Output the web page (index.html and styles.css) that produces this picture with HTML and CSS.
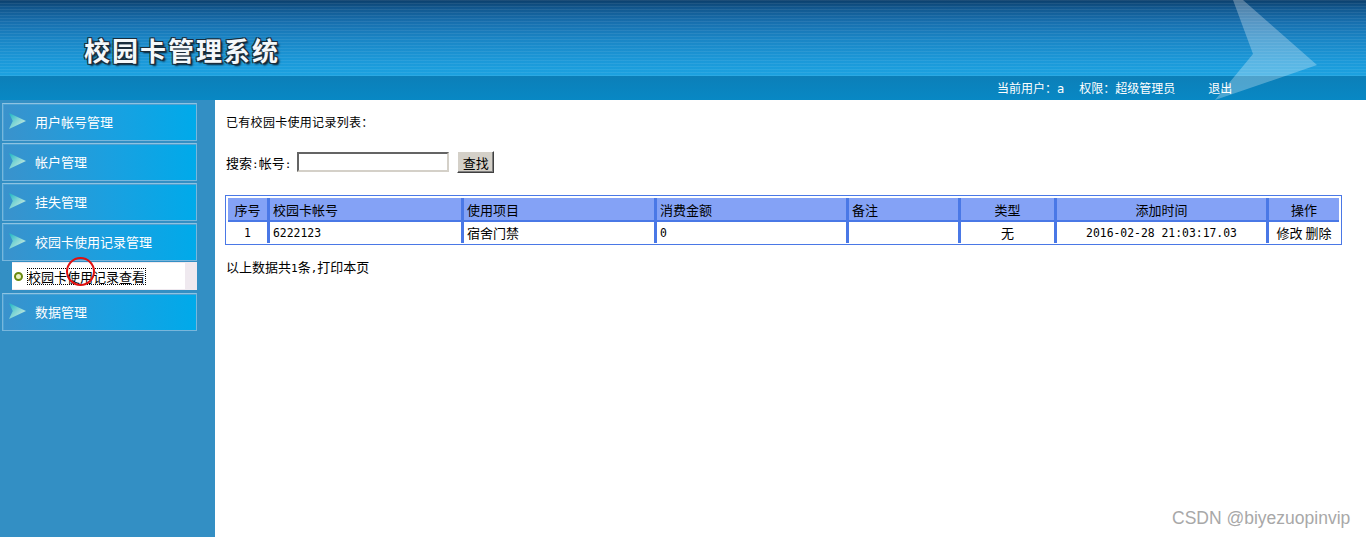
FILE: index.html
```html
<!DOCTYPE html>
<html lang="zh">
<head>
<meta charset="utf-8">
<title>校园卡管理系统</title>
<link rel="stylesheet" href="styles.css">
</head>
<body>
<div class="header">
  <div class="banner">
    <h1 class="logo">校园卡管理系统</h1>
    <svg class="plane" width="140" height="100" viewBox="0 0 140 100">
      <polygon points="18,0 28,0 102,65 0,100 38,54" fill="#ffffff" fill-opacity="0.28"/>
    </svg>
  </div>
  <div class="userbar">
    <span>当前用户：<span class="m">a</span></span>
    <span class="gap">权限：超级管理员</span>
    <span class="logout">退出</span>
  </div>
</div>
<div class="body">
  <div class="sidebar">
    <div class="menu"><span class="arrow"></span>用户帐号管理</div>
    <div class="menu"><span class="arrow"></span>帐户管理</div>
    <div class="menu"><span class="arrow"></span>挂失管理</div>
    <div class="menu"><span class="arrow"></span>校园卡使用记录管理</div>
    <div class="sub">
      <div class="subinner"><span class="ring"></span><span class="sublink">校园卡使用记录查看</span></div>
      <span class="mark"></span>
    </div>
    <div class="menu"><span class="arrow"></span>数据管理</div>
  </div>
  <div class="content">
    <p class="title">已有校园卡使用记录列表：</p>
    <div class="search">
      <span>搜索<span class="m">:</span>帐号<span class="m">:</span></span>
      <input class="inp" type="text">
      <button class="btn">查找</button>
    </div>
    <table class="grid">
      <tr>
        <th class="c1 ctr">序号</th>
        <th class="c2">校园卡帐号</th>
        <th class="c3">使用项目</th>
        <th class="c4">消费金额</th>
        <th class="c5">备注</th>
        <th class="c6 ctr">类型</th>
        <th class="c7 ctr">添加时间</th>
        <th class="c8 ctr">操作</th>
      </tr>
      <tr>
        <td class="ctr"><span class="m">1</span></td>
        <td><span class="m">6222123</span></td>
        <td>宿舍门禁</td>
        <td><span class="m">0</span></td>
        <td></td>
        <td class="ctr">无</td>
        <td class="ctr"><span class="m">2016-02-28 21:03:17.03</span></td>
        <td class="ctr">修改 删除</td>
      </tr>
    </table>
    <p class="foot">以上数据共<span class="m">1</span>条<span class="m">,</span>打印本页</p>
  </div>
</div>
<div class="watermark">CSDN @biyezuopinvip</div>
</body>
</html>
```

FILE: styles.css
```css
* { box-sizing: border-box; }
html, body { margin: 0; padding: 0; }
body {
  width: 1366px;
  height: 537px;
  overflow: hidden;
  font-family: "Noto Sans CJK SC", "DejaVu Sans", sans-serif;
  font-size: 12px;
  color: #000;
  background: #fff;
  position: relative;
}
.m {
  font-family: "DejaVu Sans Mono", "Liberation Mono", monospace;
  font-size: 11px;
}
.header { height: 100px; }
.banner {
  height: 76px;
  position: relative;
  background:
    repeating-linear-gradient(to bottom, rgba(255,255,255,0.07) 0, rgba(255,255,255,0.07) 1px, rgba(0,0,0,0) 1px, rgba(0,0,0,0) 3px),
    linear-gradient(to bottom, #0b3f6c 0, #11578e 8px, #176fae 22px, #1a86c6 40px, #1b98d8 60px, #1ca2e0 76px);
  padding: 32px 0 0 84px;
}
.logo {
  margin: 0;
  font-size: 26px;
  line-height: 36px;
  font-weight: bold;
  color: #f4f8fa;
  letter-spacing: 2px;
  text-shadow: -1px -1px 0 #1b2c3a, 1px -1px 0 #1b2c3a, -1px 1px 0 #1b2c3a, 1px 1px 0 #1b2c3a, 2px 2px 2px #0a1a28;
}
.plane {
  position: absolute;
  left: 1215px;
  top: 0;
}
.userbar {
  height: 24px;
  background: linear-gradient(to bottom, #0c7fb8 0, #0888c4 100%);
  color: #fff;
  font-size: 12px;
  line-height: 24px;
  padding-left: 997px;
  display: flex;
}
.userbar .m { font-size: 12px; }
.userbar .gap { margin-left: 15px; }
.userbar .logout { margin-left: 33px; }
.body {
  display: flex;
  height: 437px;
}
.sidebar {
  width: 215px;
  flex: none;
  background: #338fc4;
  padding: 3px 18px 0 2px;
}
.menu {
  height: 38px;
  margin-bottom: 2px;
  border: 1px solid #78b6dc;
  border-top-color: #8fc3e2;
  box-shadow: inset 1px 1px 0 #4aa2d4;
  background: linear-gradient(to right, #3a92cc 0%, #1aa0e0 55%, #00aaea 100%);
  color: #fff;
  font-size: 13px;
  display: flex;
  align-items: center;
  padding: 0 0 2px 6px;
}
.arrow {
  width: 17px;
  height: 16px;
  margin-right: 9px;
  background: linear-gradient(135deg, #18b4c4 0%, #7cd4d4 45%, #e0f2e4 100%);
  clip-path: polygon(0 0, 100% 50%, 0 100%, 22% 50%);
}
.sub {
  height: 28px;
  margin: -1px 0 3px 10px;
  background: #efe9ef;
  position: relative;
  padding: 1px 12px 0 0;
}
.subinner {
  background: #fff;
  height: 26px;
  display: flex;
  align-items: center;
  padding-left: 2px;
}
.ring {
  width: 9px;
  height: 9px;
  border-radius: 50%;
  border: 2px solid #6a8a10;
  background: #e8f0c0;
  margin-right: 5px;
}
.sublink {
  font-size: 13px;
  outline: 1px dotted #000;
  line-height: 15px;
}
.mark {
  position: absolute;
  left: 54px;
  top: -5px;
  width: 29px;
  height: 29px;
  border: 2px solid #e01010;
  border-radius: 50%;
}
.content {
  flex: 1;
  padding: 14px 0 0 11px;
}
.title {
  margin: 0;
  line-height: 16px;
  letter-spacing: 0.3px;
}
.search {
  margin-top: 21px;
  height: 22px;
  display: flex;
  align-items: center;
  font-size: 13px;
}
.inp {
  width: 152px;
  height: 20px;
  margin: 0 0 0 6px;
  border: 2px solid;
  border-color: #646464 #d4d0c8 #d4d0c8 #646464;
  background: #fff;
  padding: 0;
}
.btn {
  margin-left: 8px;
  width: 37px;
  height: 22px;
  padding: 0;
  font-family: "Noto Sans CJK SC", sans-serif;
  font-size: 13px;
  background: #d4d0c8;
  border: 1px solid;
  border-color: #fff #404040 #404040 #fff;
  box-shadow: inset -1px -1px 0 #808080;
  color: #000;
}
.grid {
  margin: 22px 0 0 -1px;
  width: 1116px;
  table-layout: fixed;
  border-collapse: separate;
  border-spacing: 0;
  border: 1px solid #4a78e6;
  padding: 2px 2px 1px 2px;
}
.grid th, .grid td {
  border-left: 3px solid #4a78e6;
  padding: 0 0 0 3px;
  text-align: left;
  font-weight: normal;
  font-size: 13px;
  white-space: nowrap;
}
.grid .m { font-size: 11.4px; }
.grid th:first-child, .grid td:first-child { border-left: 0; }
.grid th {
  background: #84a2f6;
  height: 24px;
  border-bottom: 2px solid #4a78e6;
}
.grid td { height: 21px; line-height: 18px; }
.grid .ctr { text-align: center; padding: 0; }
.c1 { width: 39px; }
.c2 { width: 194px; }
.c3 { width: 193px; }
.c4 { width: 192px; }
.c5 { width: 112px; }
.c6 { width: 96px; }
.c7 { width: 212px; }
.c8 { width: 73px; }
.foot {
  margin: 14px 0 0 0;
  line-height: 16px;
  font-size: 13px;
}
.foot .m { font-size: 11px; }
.watermark {
  position: absolute;
  left: 1172px;
  top: 508px;
  font-family: "Liberation Sans", Arial, sans-serif;
  font-size: 17.5px;
  color: #a8a8a8;
  text-shadow: 0 0 1px #ffffff;
}
```
